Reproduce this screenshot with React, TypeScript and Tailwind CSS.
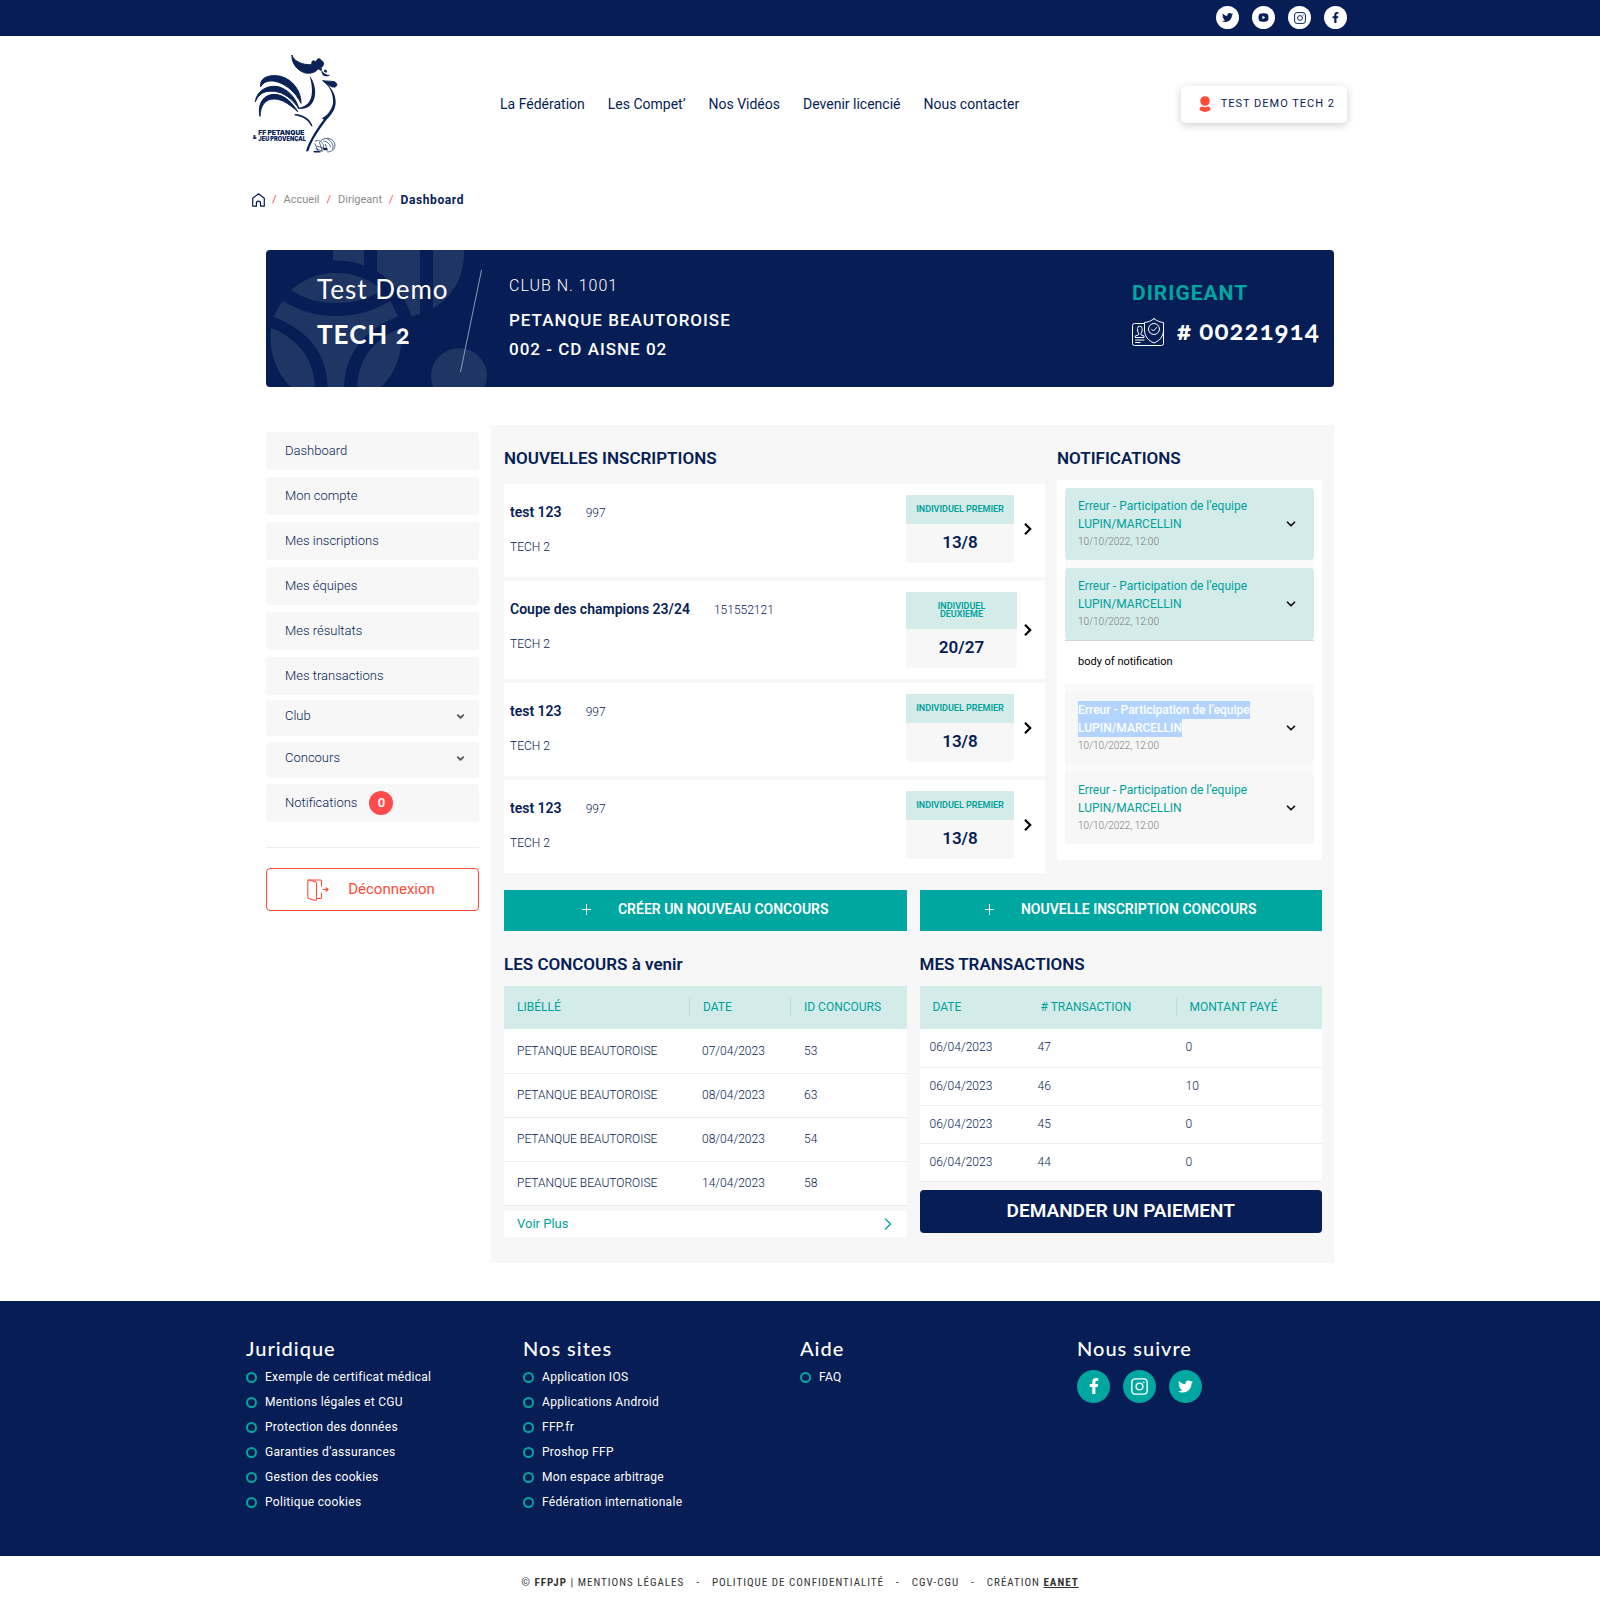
import React from "react";
import { ChevronDown, ChevronRight } from "lucide-react";
import { FaFacebookF, FaTwitter } from "react-icons/fa";

function Instagram({ className }: { className: string }) {
  return (
    <svg viewBox="0 0 16 16" className={className} fill="none" stroke="currentColor" strokeWidth="1.3" aria-hidden="true">
      <rect x="0.8" y="0.8" width="14.4" height="14.4" rx="3.2" />
      <circle cx="8" cy="8" r="3.2" />
      <circle cx="12" cy="4" r="0.8" fill="currentColor" stroke="none" />
    </svg>
  );
}

function Youtube({ className }: { className: string }) {
  return (
    <svg viewBox="0 0 12 10" className={className} aria-hidden="true">
      <path
        fill="currentColor"
        fillRule="evenodd"
        d="M3 .6Q6 .2 9 .6Q11.2.8 11.4 3Q11.6 5 11.4 7Q11.2 9.2 9 9.4Q6 9.8 3 9.4Q.8 9.2.6 7Q.4 5 .6 3Q.8.8 3 .6ZM4.8 3.1V6.9L8 5Z"
      />
    </svg>
  );
}

function Logo() {
  return (
    <svg viewBox="36 36 264 312" className="h-[104px] w-[88px]" fill="#0a2256" role="img" aria-label="FF Pétanque & Jeu Provençal">
      <g stroke="#0a2256" strokeWidth="3" strokeLinejoin="round">
        <path d="M156 45C160 62 185 76 216 74C214 66 217 61 222 63C226 66 230 64 231 59C236 54 243 57 243 62C250 62 252 70 249 77C244 84 238 87 233 88C225 99 205 103 190 97C168 88 154 66 156 45Z" />
        <path d="M62 140C58 112 90 102 122 109C160 119 184 156 183 190C168 158 136 128 100 123C82 122 70 127 62 140Z" />
        <path d="M46 185C51 147 92 131 124 143C152 155 168 178 177 206C156 176 132 158 104 154C74 151 57 160 46 185Z" />
        <path d="M60 229C51 190 73 162 104 163C136 165 158 190 173 215C150 194 128 178 104 177C76 176 61 196 60 229Z" />
        <path d="M248 122C258 124 272 123 283 125C292 129 293 138 285 141C275 143 262 134 248 122Z" />
      </g>
      <circle cx="242" cy="88" r="4" />
      <path d="M245 90C250 100 258 105 270 105C266 110 254 110 248 104C245 100 244 95 245 90ZM254 88L262 92L259 98L252 95Z" />
      <path d="M248 124C272 138 288 160 287 190C285 212 271 228 259 240C241 264 215 300 205 334L198 334C207 300 233 262 251 239L246 234C262 228 275 210 279 190C281 162 270 140 248 124Z" />
      <path d="M209 108C234 138 234 204 184 207L168 204C214 203 225 166 209 108Z" />
      <path d="M164 222C194 223 213 240 218 260L213 258C205 241 190 231 164 226Z" />
      <g fill="none" stroke="#0a2256" strokeWidth="2">
        <path d="M242 302C258 290 282 294 285 314C286 326 276 336 262 336" />
        <path d="M250 303C262 304 270 312 272 322M262 297C276 304 282 316 278 328M256 312L262 334" />
        <path d="M224 304C234 298 246 304 250 314C252 324 248 334 238 337" />
        <path d="M224 310L236 336M230 318L256 326M226 326L248 334M238 306L246 330" />
      </g>
      <ellipse cx="256" cy="327" rx="7" ry="4" />
      <ellipse cx="230" cy="335" rx="10" ry="2.5" />
      <text x="55" y="286" fontSize="20" fontWeight="900" fontFamily="Inter, sans-serif">FF PETANQUE</text>
      <text x="55" y="304" fontSize="17" fontWeight="900" fontFamily="Inter, sans-serif">JEU PROVENÇAL</text>
      <text x="38" y="296" fontSize="16" fontWeight="900" fontFamily="Inter, sans-serif">&amp;</text>
    </svg>
  );
}

function BannerPattern() {
  return (
    <svg viewBox="0 0 222 137" className="absolute left-0 top-0 h-[137px] w-[222px]" fill="#1f3564" aria-hidden="true">
      <path d="M67 0H98V15.500C88 11.500 78 10.500 67 10.500Z" />
      <path d="M111 0H154V64L145.500 66.500C140 48 128 31 111 21.500Z" />
      <path d="M167 0H198V4C198 26 187 47 167 58Z" />
      <path d="M25 40C38 29 52 23 70 23C88 23 103 29 116 40C103 49 88 53 70 53C52 53 38 49 25 40Z" />
      <path d="M17 51C34 61 50 66 70 66C90 66 107 61 124 51C127.500 56 129.500 61 131.500 66.500C98 80 79 104 78 137H61.500C61 104 42 80 8 67C10 61 13 56 17 51Z" />
      <path d="M5 78C32 88 48 110 49 137H25C11 124 2 102 5 78Z" />
      <path d="M135 78C108 88 92 110 91 137H115C129 124 138 102 135 78Z" />
      <circle cx="193" cy="126" r="28" />
    </svg>
  );
}

function LicenceIcon() {
  return (
    <svg viewBox="0 0 32 28" className="h-7 w-8 shrink-0" fill="none" stroke="#fff" strokeWidth="1" strokeLinecap="round" strokeLinejoin="round" aria-hidden="true">
      <path d="M12 5.500H2.500A2 2 0 0 0 .5 7.500V25.500A2 2 0 0 0 2.500 27.500H29.500A2 2 0 0 0 31.500 25.500V7" />
      <path d="M22 .7C19 3 16 4.200 12.500 4.500V12C12.500 18 16 22.500 22 25C28 22.500 31.500 18 31.500 12V4.500C28 4.200 25 3 22 .7Z" />
      <circle cx="22" cy="11" r="5.500" />
      <path d="M19.600 11.200L21.400 13L24.600 9.500" />
      <path d="M5.500 12V10.500A2.300 2.300 0 0 1 10.100 10.500V12Q10 14.500 9 15.200V16.800L12 18V19.500H3.200V18L6.600 16.800V15.200Q5.600 14.500 5.500 12Z" />
      <path d="M3.500 22H12M3.500 24.500H8" />
    </svg>
  );
}

function DoorIcon() {
  return (
    <svg viewBox="0 0 22 22" className="h-[22px] w-[22px]" fill="none" stroke="#ff4b38" strokeWidth="1.1" strokeLinecap="round" strokeLinejoin="round" aria-hidden="true">
      <path d="M1.500 1H13.500Q14.500 1 14.500 2V7M14.500 14V18.500Q14.500 19.500 13.500 19.500H9.500" />
      <path d="M1.500 1Q.8 1 .8 2V18Q.8 19 1.600 19.400L7.500 21.300Q9.500 21.600 9.500 20V4.500Q9.500 3.200 8.300 2.800L2.500 1" />
      <path d="M16 10.500H21M19 8.800L21.200 10.500L19 12.200" />
    </svg>
  );
}

const nav = ["La Fédération", "Les Compet’", "Nos Vidéos", "Devenir licencié", "Nous contacter"];
const menu = ["Dashboard", "Mon compte", "Mes inscriptions", "Mes équipes", "Mes résultats", "Mes transactions"];
const inscriptions = [
  { name: "test 123", id: "997", type: "INDIVIDUEL PREMIER", score: "13/8", width: "w-[108px]" },
  { name: "Coupe des champions 23/24", id: "151552121", type: "INDIVIDUEL DEUXIEME", score: "20/27", width: "w-[111px]" },
  { name: "test 123", id: "997", type: "INDIVIDUEL PREMIER", score: "13/8", width: "w-[108px]" },
  { name: "test 123", id: "997", type: "INDIVIDUEL PREMIER", score: "13/8", width: "w-[108px]" },
];
const notifications = [
  { unread: true, open: false, selected: false },
  { unread: true, open: true, selected: false },
  { unread: false, open: false, selected: true },
  { unread: false, open: false, selected: false },
];
const concours = [
  ["07/04/2023", "53"],
  ["08/04/2023", "63"],
  ["08/04/2023", "54"],
  ["14/04/2023", "58"],
];
const transactions = [
  ["47", "0"],
  ["46", "10"],
  ["45", "0"],
  ["44", "0"],
];
const footerLists = [
  {
    title: "Juridique",
    links: ["Exemple de certificat médical", "Mentions légales et CGU", "Protection des données", "Garanties d'assurances", "Gestion des cookies", "Politique cookies"],
  },
  {
    title: "Nos sites",
    links: ["Application IOS", "Applications Android", "FFP.fr", "Proshop FFP", "Mon espace arbitrage", "Fédération internationale"],
  },
  { title: "Aide", links: ["FAQ"] },
];

function TopBar() {
  const link = "flex h-[23px] w-[23px] items-center justify-center rounded-full bg-white text-[#061d55]";
  return (
    <div className="bg-[#061d55]">
      <div className="mx-auto flex h-9 max-w-[1108px] items-center justify-end gap-[13px] pb-px pr-[7px]">
        <a href="#" aria-label="Twitter" className={link}><FaTwitter className="h-[11px] w-[11px]" /></a>
        <a href="#" aria-label="YouTube" className={link}><Youtube className="h-[9px] w-[11px]" /></a>
        <a href="#" aria-label="Instagram" className={link}><Instagram className="h-3 w-3" /></a>
        <a href="#" aria-label="Facebook" className={link}><FaFacebookF className="h-[11px] w-[11px]" /></a>
      </div>
    </div>
  );
}

function Header() {
  return (
    <header className="mx-auto flex h-[136px] max-w-[1108px] items-center pl-[6px] pr-[7px]">
      <a href="#"><Logo /></a>
      <nav className="ml-[160px] flex gap-[23px] text-[14px] text-[#061d55]">
        {nav.map((n) => (
          <a key={n} href="#">{n}</a>
        ))}
      </nav>
      <button className="ml-auto flex h-[37px] items-center gap-[10px] rounded-[5px] bg-white pl-[18px] pr-3 text-[11px] tracking-[1px] text-[#061d55] shadow-[0_2px_8px_rgba(0,0,0,0.2)]">
        <svg viewBox="0 0 12 16" className="h-4 w-3" fill="#ff4b38" aria-hidden="true">
          <circle cx="6" cy="5" r="4.800" />
          <path d="M.3 13.800Q1 10.600 3 10.500Q6 12 9 10.500Q11 10.600 11.700 13.800Q9 15.900 6 15.900Q3 15.900.3 13.800Z" />
        </svg>
        TEST DEMO TECH 2
      </button>
    </header>
  );
}

function Breadcrumb() {
  const slash = <span className="text-[#ff4b4b]">/</span>;
  return (
    <nav className="mx-auto mb-9 mt-[14px] flex h-7 max-w-[1108px] items-center gap-[7px] px-[6px] text-[11px] text-[#8b8b8b]">
      <a href="#" aria-label="Accueil">
        <svg viewBox="0 0 13 14" className="h-[14px] w-[13px]" fill="none" stroke="#061d55" strokeWidth="1.200" strokeLinejoin="round" aria-hidden="true">
          <path d="M.7 5.200L6.500.8L12.300 5.200V13.200H8.600V10.200A2.100 2.100 0 0 0 4.400 10.200V13.200H.7Z" />
        </svg>
      </a>
      {slash}
      <a href="#">Accueil</a>
      {slash}
      <a href="#">Dirigeant</a>
      {slash}
      <span className="text-[12px] font-bold tracking-wider text-[#061d55]">Dashboard</span>
    </nav>
  );
}

function Banner() {
  return (
    <section className="relative flex h-[137px] overflow-hidden rounded-[4px] bg-[#061d55] text-white">
      <BannerPattern />
      <div className="relative flex w-[194px] shrink-0 flex-col gap-[15px] pl-[51px] pt-6 font-['Lato',sans-serif] tracking-[1px]">
        <p className="whitespace-nowrap text-[26px] leading-[30px]">Test Demo</p>
        <p className="text-[26px] font-bold leading-[30px] oldstyle-nums">TECH 2</p>
      </div>
      <svg viewBox="0 0 22 102" className="relative mt-5 h-[102px] w-[22px] shrink-0" stroke="#8d99b5" strokeWidth="1" aria-hidden="true">
        <path d="M21.500 0L.5 102" />
      </svg>
      <div className="ml-[27px] pt-6 leading-6 tracking-[1px]">
        <p className="text-[16px] font-light">CLUB N. 1001</p>
        <p className="mt-[10px] text-[17px] font-medium">PETANQUE BEAUTOROISE</p>
        <p className="mt-[5px] text-[17px] font-medium">002 - CD AISNE 02</p>
      </div>
      <div className="ml-auto mr-[14px] w-[188px] pt-[31px]">
        <p className="text-[21px] font-bold leading-6 tracking-[1px] text-[#00a7a0]">DIRIGEANT</p>
        <div className="mt-3 flex items-center gap-[13px]">
          <LicenceIcon />
          <p className="whitespace-nowrap pb-[3px] font-['Lato',sans-serif] text-[26px] font-bold leading-[27px] tracking-[1px] oldstyle-nums"># 00221914</p>
        </div>
      </div>
    </section>
  );
}

function Sidebar() {
  const item = "flex items-center rounded-[4px] bg-[#f7f7f7] pl-[19px]";
  return (
    <aside className="mt-[7px] w-[213px] shrink-0 text-[13px] font-light text-[#061d55]">
      <ul className="flex flex-col gap-[7px]">
        {menu.map((m) => (
          <li key={m}><a href="#" className={item + " h-[38px]"}>{m}</a></li>
        ))}
      </ul>
      <ul className="mt-[5px] flex flex-col gap-[6px]">
        {["Club", "Concours"].map((m) => (
          <li key={m}>
            <button className={item + " h-9 w-full justify-between pb-1 pr-[13px]"}>
              {m}
              <ChevronDown className="h-[11px] w-[11px] text-[#555]" strokeWidth={4} aria-hidden="true" />
            </button>
          </li>
        ))}
        <li>
          <a href="#" className={item + " h-[38px] gap-3"}>
            Notifications
            <span className="flex h-6 w-6 items-center justify-center rounded-full bg-[#ff4b4b] font-semibold text-white">0</span>
          </a>
        </li>
      </ul>
      <hr className="mb-5 mt-[25px] border-[#ededed]" />
      <button className="flex h-[43px] w-full items-center justify-center gap-[19px] rounded-[4px] border border-[#ff4b38] pr-[3px] text-[15px] font-normal text-[#ff4b38]">
        <DoorIcon />
        Déconnexion
      </button>
    </aside>
  );
}

function Title({ children }: { children: React.ReactNode }) {
  return <h2 className="text-[17px] font-semibold leading-6 text-[#061d55]">{children}</h2>;
}

function Inscriptions() {
  return (
    <section className="min-w-0 flex-1">
      <Title>NOUVELLES INSCRIPTIONS</Title>
      <ul className="mt-[14px] flex flex-col gap-1 text-[#061d55]">
        {inscriptions.map((r, i) => (
          <li key={i} className="flex min-h-[93px] items-start bg-white py-[11px] pl-[6px] pr-3">
            <div className="flex-1 pt-[7px] text-[12px] font-light leading-5">
              <p>
                <b className="mr-6 text-[14px] font-semibold">{r.name}</b>
                {r.id}
              </p>
              <p className="mt-[14px]">TECH 2</p>
            </div>
            <div className="flex w-[127px] items-center justify-between">
              <div className={r.width + " overflow-hidden rounded-b-[4px] text-center"}>
                <p className="bg-[#d3ecea] px-[10px] pb-[11px] pt-[10px] text-[9px] font-semibold leading-[8px] text-[#00a19a]">{r.type}</p>
                <p className="bg-[#f7f7f7] pb-[3px] text-[17px] font-semibold leading-9">{r.score}</p>
              </div>
              <a href="#" aria-label={"Ouvrir " + r.name} className="text-black">
                <svg viewBox="0 0 10 14" className="h-[14px] w-[10px]" fill="none" stroke="currentColor" strokeWidth="2.200" aria-hidden="true">
                  <path d="M2 1.800L7.200 7L2 12.200" />
                </svg>
              </a>
            </div>
          </li>
        ))}
      </ul>
    </section>
  );
}

function Notifications() {
  return (
    <section className="w-[265px] shrink-0">
      <Title>NOTIFICATIONS</Title>
      <div className="mt-[10px] bg-white px-2 pb-4 pt-2">
        <ul className="flex flex-col gap-2 bg-[#fafafa]">
          {notifications.map((n, i) => (
            <li key={i}>
              <button
                aria-expanded={n.open}
                className={
                  (n.unread ? "bg-[#d3ecea]" : "bg-[#f7f7f7]") +
                  " flex w-full items-center justify-between rounded-[4px] pb-[9px] pl-[13px] pr-4 pt-[9px] text-left"
                }
              >
                <span className="text-[12px] leading-[18px] text-[#00a19a]">
                  <span className={n.selected ? "block w-fit bg-[#b3d4ff] font-medium text-white" : "block w-fit"}>Erreur - Participation de l’equipe</span>
                  <span className={n.selected ? "block w-fit bg-[#b3d4ff] font-medium text-white" : "block w-fit"}>LUPIN/MARCELLIN</span>
                  <span className="block text-[10px] font-light text-[#777]">10/10/2022, 12:00</span>
                </span>
                <ChevronDown className="h-[14px] w-[14px] text-[#111]" strokeWidth={3} aria-hidden="true" />
              </button>
              {n.open && (
                <p className="flex h-11 items-center border-t border-[#d4d4d4] bg-white pl-[13px] text-[11px] text-black">body of notification</p>
              )}
            </li>
          ))}
        </ul>
      </div>
    </section>
  );
}

function ActionButton({ children }: { children: React.ReactNode }) {
  return (
    <button className="flex h-[41px] items-center justify-center gap-[27px] bg-[#00a7a0] pb-[2px] text-[14px] font-semibold text-white">
      <svg viewBox="0 0 9 11" className="h-[11px] w-[9px]" stroke="#fff" strokeWidth="1" aria-hidden="true">
        <path d="M0 5.500H9M4.500 0V11" />
      </svg>
      {children}
    </button>
  );
}

function Head({ children, sep }: { children: React.ReactNode; sep?: boolean }) {
  return (
    <th scope="col" className="h-[43px] p-0 pb-[2px] text-left font-normal">
      <span className={(sep ? "border-l border-[#bddcdc]" : "") + " block pl-[13px] leading-[18px]"}>{children}</span>
    </th>
  );
}

function Concours() {
  return (
    <section>
      <Title>LES CONCOURS à venir</Title>
      <table className="mt-[10px] w-full table-fixed text-[12px] text-[#061d55]">
        <colgroup>
          <col className="w-[185px]" />
          <col className="w-[101px]" />
          <col />
        </colgroup>
        <thead className="bg-[#d3ecea] text-[#00a19a]">
          <tr>
            <Head>LIBÉLLÉ</Head>
            <Head sep>DATE</Head>
            <Head sep>ID CONCOURS</Head>
          </tr>
        </thead>
        <tbody className="bg-white font-light">
          {concours.map((r) => (
            <tr key={r[1]} className="h-11 border-b border-[#ececec]">
              <td className="pl-[13px]">PETANQUE BEAUTOROISE</td>
              <td className="pl-[13px]">{r[0]}</td>
              <td className="pl-[14px]">{r[1]}</td>
            </tr>
          ))}
        </tbody>
      </table>
      <a href="#" className="mt-[5px] flex h-[26px] items-center justify-between rounded-[4px] bg-white pl-[13px] pr-[9px] text-[13px] text-[#00a19a]">
        Voir Plus
        <ChevronRight className="h-5 w-5" strokeWidth={1.5} aria-hidden="true" />
      </a>
    </section>
  );
}

function Transactions() {
  return (
    <section>
      <Title>MES TRANSACTIONS</Title>
      <table className="mt-[10px] w-full table-fixed text-[12px] text-[#061d55]">
        <colgroup>
          <col className="w-[108px]" />
          <col className="w-[148px]" />
          <col />
        </colgroup>
        <thead className="bg-[#d3ecea] text-[#00a19a]">
          <tr>
            <Head>DATE</Head>
            <Head># TRANSACTION</Head>
            <Head sep>MONTANT PAYÉ</Head>
          </tr>
        </thead>
        <tbody className="bg-white font-light">
          {transactions.map((r) => (
            <tr key={r[0]} className="h-[38px] border-b border-[#ececec]">
              <td className="pb-px pl-[10px]">06/04/2023</td>
              <td className="pb-px pl-[10px]">{r[0]}</td>
              <td className="pb-px pl-[10px]">{r[1]}</td>
            </tr>
          ))}
        </tbody>
      </table>
      <button className="mt-2 h-[43px] w-full rounded-[4px] bg-[#061d55] text-[19px] font-semibold text-white">DEMANDER UN PAIEMENT</button>
    </section>
  );
}

function Footer() {
  const social = "flex h-[33px] w-[33px] items-center justify-center rounded-full bg-[#00a7a0]";
  const heading = "font-['Lato',sans-serif] text-[20px] font-medium leading-6 tracking-[1px]";
  return (
    <footer>
      <div className="bg-[#061d55] text-white">
        <div className="mx-auto grid max-w-[1108px] grid-cols-4 pb-[41px] pt-[35px]">
          {footerLists.map((c) => (
            <div key={c.title}>
              <h3 className={heading}>{c.title}</h3>
              <ul className="mt-[5px] text-[12px] leading-[25px] tracking-wide">
                {c.links.map((l) => (
                  <li key={l}>
                    <a href="#" className="flex items-center gap-2">
                      <span className="h-[11px] w-[11px] rounded-full border-2 border-[#00a7a0]" />
                      {l}
                    </a>
                  </li>
                ))}
              </ul>
            </div>
          ))}
          <div>
            <h3 className={heading}>Nous suivre</h3>
            <div className="mt-[10px] flex gap-[13px]">
              <a href="#" aria-label="Facebook" className={social}><FaFacebookF className="h-4 w-4" /></a>
              <a href="#" aria-label="Instagram" className={social}><Instagram className="h-[17px] w-[17px]" /></a>
              <a href="#" aria-label="Twitter" className={social}><FaTwitter className="h-[15px] w-[15px]" /></a>
            </div>
          </div>
        </div>
      </div>
      <div className="flex h-[52px] items-center justify-center gap-3 pt-[3px] font-['Roboto_Condensed','Roboto',sans-serif] text-[11px] tracking-[1px] text-[#333]">
        <a href="#">© <b>FFPJP</b> | MENTIONS LÉGALES</a>
        <span>-</span>
        <a href="#">POLITIQUE DE CONFIDENTIALITÉ</a>
        <span>-</span>
        <a href="#">CGV-CGU</a>
        <span>-</span>
        <span>CRÉATION <a href="#" className="font-bold underline">EANET</a></span>
      </div>
    </footer>
  );
}

export default function App() {
  return (
    <div className="bg-white font-['Roboto',sans-serif]">
      <TopBar />
      <Header />
      <Breadcrumb />
      <main className="mx-auto mb-[38px] max-w-[1108px] px-5">
        <Banner />
        <div className="mt-[38px] flex items-start gap-3">
          <Sidebar />
          <div className="min-w-0 flex-1 bg-[#f7f7f7] pb-[26px] pl-[13px] pr-3 pt-[21px]">
            <div className="flex items-start gap-3">
              <Inscriptions />
              <Notifications />
            </div>
            <div className="mt-[17px] grid grid-cols-2 gap-x-[13px] gap-y-[21px]">
              <ActionButton>CRÉER UN NOUVEAU CONCOURS</ActionButton>
              <ActionButton>NOUVELLE INSCRIPTION CONCOURS</ActionButton>
              <Concours />
              <Transactions />
            </div>
          </div>
        </div>
      </main>
      <Footer />
    </div>
  );
}
